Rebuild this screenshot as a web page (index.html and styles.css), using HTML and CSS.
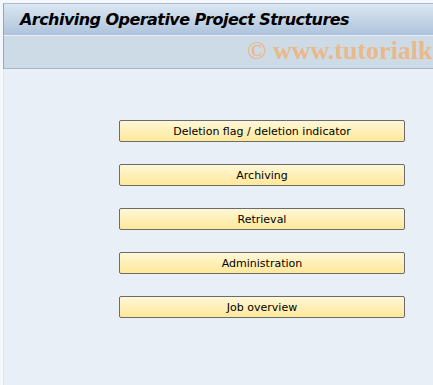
FILE: index.html
```html
<!DOCTYPE html>
<html>
<head>
<meta charset="utf-8">
<link rel="stylesheet" href="styles.css">
</head>
<body>
<div class="frame">
  <div class="titlebar">
    <h1 class="title">Archiving Operative Project Structures</h1>
  </div>
  <div class="toolbar">
    <span class="watermark">© www.tutorialkart.com</span>
  </div>
  <div class="content">
    <button class="btn">Deletion flag / deletion indicator</button>
    <button class="btn">Archiving</button>
    <button class="btn">Retrieval</button>
    <button class="btn">Administration</button>
    <button class="btn">Job overview</button>
  </div>
</div>
</body>
</html>
```

FILE: styles.css
```css
html, body {
  margin: 0;
  padding: 0;
  width: 433px;
  height: 385px;
  overflow: hidden;
  background: #f4f7fb;
}
.frame {
  padding-top: 3px;
  height: 382px;
  display: flex;
  flex-direction: column;
}
.titlebar {
  margin-left: 3px;
  height: 31px;
  border-left: 1px solid #8ea6c2;
  border-top: 1px solid #a9bcd2;
  background: linear-gradient(to bottom, #dbe6f1 0%, #c5d5e6 50%, #adc3dc 100%);
  display: flex;
  align-items: center;
  border-bottom: 1px solid #e8eff6;
}
.title {
  margin: 0 0 0 16px;
  font-family: "DejaVu Sans", sans-serif;
  font-weight: bold;
  font-style: italic;
  font-size: 16px;
  color: #000;
  letter-spacing: -0.55px;
}
.toolbar {
  margin-left: 3px;
  height: 32px;
  border-left: 1px solid #8ea6c2;
  border-bottom: 1px solid #a3b6cb;
  background: #cddbe7;
  position: relative;
  overflow: hidden;
}
.watermark {
  position: absolute;
  left: 243px;
  top: 0px;
  font-family: "Liberation Serif", serif;
  font-weight: bold;
  font-size: 26px;
  color: #e9b98a;
  white-space: nowrap;
}
.content {
  flex: 1;
  margin-left: 3px;
  border-left: 1px solid #dfe6ef;
  background: #e9eff7;
  display: flex;
  flex-direction: column;
  align-items: flex-start;
  gap: 22px;
  padding-top: 51px;
  padding-left: 115px;
}
.btn {
  width: 286px;
  height: 22px;
  margin: 0;
  padding: 0;
  border: 1px solid #6b6b6b;
  border-radius: 2px;
  background: linear-gradient(to bottom, #fff8d8 0%, #fff0b8 50%, #ffe89a 100%);
  font-family: "DejaVu Sans", sans-serif;
  font-size: 11px;
  color: #000;
  text-align: center;
}
```
